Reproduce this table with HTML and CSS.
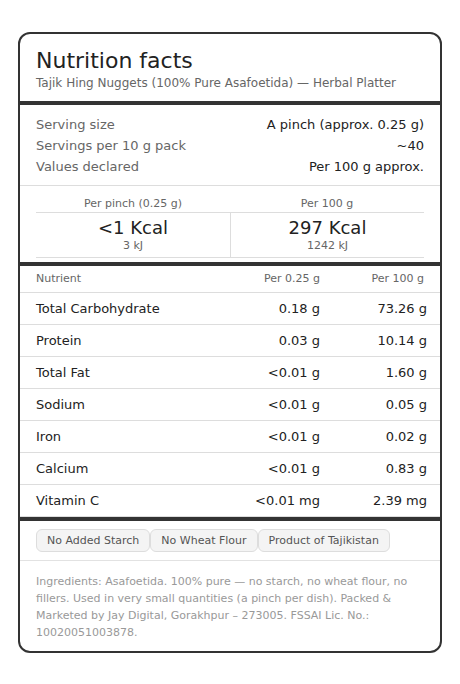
FILE: index.html
```html
<!DOCTYPE html>
<html lang="en">
<head>
    <meta charset="UTF-8">
    <meta name="viewport" content="width=device-width, initial-scale=1.0">
    <title>Nutrition facts - Tajik Hing Nuggets</title>
    <link rel="stylesheet" href="styles.css">
</head>
<body>
<div class="label">
    <div class="label-head">
        <h1>Nutrition facts</h1>
        <p>Tajik Hing Nuggets (100% Pure Asafoetida) — Herbal Platter</p>
    </div>

    <div class="serving">
        <div class="serving-row"><span>Serving size</span><span class="val">A pinch (approx. 0.25 g)</span></div>
        <div class="serving-row"><span>Servings per 10 g pack</span><span class="val">~40</span></div>
        <div class="serving-row"><span>Values declared</span><span class="val">Per 100 g approx.</span></div>
    </div>

    <div class="energy">
        <div class="energy-grid">
            <div class="energy-head">Per pinch (0.25 g)</div>
            <div class="energy-head">Per 100 g</div>
            <div class="energy-cell">
                <div class="kcal">&lt;1 Kcal</div>
                <div class="kj">3 kJ</div>
            </div>
            <div class="energy-cell right">
                <div class="kcal">297 Kcal</div>
                <div class="kj">1242 kJ</div>
            </div>
        </div>
    </div>

    <div class="nutrients">
        <div class="n-head">
            <span>Nutrient</span>
            <span class="num">Per 0.25 g</span>
            <span class="num">Per 100 g</span>
        </div>
        <div class="n-row"><span>Total Carbohydrate</span><span class="num">0.18 g</span><span class="num">73.26 g</span></div>
        <div class="n-row"><span>Protein</span><span class="num">0.03 g</span><span class="num">10.14 g</span></div>
        <div class="n-row"><span>Total Fat</span><span class="num">&lt;0.01 g</span><span class="num">1.60 g</span></div>
        <div class="n-row"><span>Sodium</span><span class="num">&lt;0.01 g</span><span class="num">0.05 g</span></div>
        <div class="n-row"><span>Iron</span><span class="num">&lt;0.01 g</span><span class="num">0.02 g</span></div>
        <div class="n-row"><span>Calcium</span><span class="num">&lt;0.01 g</span><span class="num">0.83 g</span></div>
        <div class="n-row"><span>Vitamin C</span><span class="num">&lt;0.01 mg</span><span class="num">2.39 mg</span></div>
    </div>

    <div class="chips">
        <span class="chip">No Added Starch</span>
        <span class="chip">No Wheat Flour</span>
        <span class="chip">Product of Tajikistan</span>
    </div>

    <p class="ingredients">Ingredients: Asafoetida. 100% pure — no starch, no wheat flour, no fillers. Used in very small quantities (a pinch per dish). Packed &amp; Marketed by Jay Digital, Gorakhpur – 273005. FSSAI Lic. No.: 10020051003878.</p>
</div>
</body>
</html>
```

FILE: styles.css
```css
body {
    margin: 0;
    padding: 32px 18px;
    background: #FFFFFF;
    font-family: 'DejaVu Sans', sans-serif;
    color: #222222;
}

.label {
    border: 2px solid #333333;
    border-radius: 12px;
    overflow: hidden;
    background: #FFFFFF;
}

.label-head {
    padding: 14px 16px 10px;
    border-bottom: 4px solid #333333;
}

.label-head h1 {
    margin: 0;
    font-size: 22px;
    line-height: 26px;
    font-weight: 400;
    color: #222222;
}

.label-head p {
    margin: 1px 0 0;
    font-size: 12px;
    line-height: 16px;
    color: #666666;
}

.serving {
    padding: 9px 16px 8px;
    border-bottom: 1px solid #DDDDDD;
}

.serving-row {
    display: flex;
    justify-content: space-between;
    font-size: 13px;
    line-height: 21px;
    color: #666666;
}

.serving-row .val {
    color: #222222;
}

.energy {
    padding: 10px 16px 4px;
    border-bottom: 4px solid #333333;
}

.energy-grid {
    display: grid;
    grid-template-columns: 1fr 1fr;
    text-align: center;
    border-bottom: 1px solid #DDDDDD;
}

.energy-head {
    font-size: 11px;
    line-height: 15px;
    color: #666666;
    padding-bottom: 1px;
    border-bottom: 1px solid #DDDDDD;
}

.energy-cell {
    padding: 4px 0 4px;
}

.energy-cell.right {
    border-left: 1px solid #DDDDDD;
}

.kcal {
    font-size: 18px;
    line-height: 22px;
    color: #222222;
}

.kj {
    font-size: 11px;
    line-height: 14px;
    color: #666666;
}

.nutrients {
    border-bottom: 4px solid #333333;
}

.n-head,
.n-row {
    display: grid;
    grid-template-columns: 1fr 90px 88px;
    column-gap: 16px;
    border-bottom: 1px solid #DDDDDD;
}

.n-head {
    padding: 5px 16px 6px;
    font-size: 11px;
    line-height: 15px;
    color: #666666;
}

.n-row {
    grid-template-columns: 1fr 90px 91px;
    padding: 7px 13px 6px 16px;
    font-size: 13px;
    line-height: 18px;
    color: #222222;
}

.num {
    text-align: right;
}

.chips {
    display: flex;
    padding: 8px 16px 8px;
    border-bottom: 1px solid #E2E2E2;
}

.chip {
    padding: 3px 10px;
    font-size: 11px;
    line-height: 15px;
    color: #555555;
    background: #F4F4F4;
    border: 1px solid #DDDDDD;
    border-radius: 6px;
}

.ingredients {
    margin: 0;
    padding: 12px 16px 10px;
    font-size: 11px;
    line-height: 17px;
    color: #999999;
}
```
